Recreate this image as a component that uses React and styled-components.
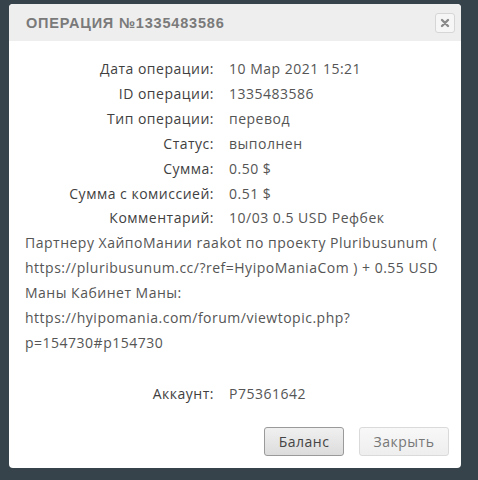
import styled, { createGlobalStyle } from "styled-components";

const GlobalStyle = createGlobalStyle`
  html, body {
    margin: 0;
    padding: 0;
    background: #36434b;
  }
  body {
    font-family: "Open Sans", "Liberation Sans", sans-serif;
  }
`;

/* ======================
      Styled Components
======================= */

const Backdrop = styled.div`
  width: 478px;
  height: 480px;
  padding: 4px 0 0 9px;
  box-sizing: border-box;
  overflow: hidden;
`;

const Dialog = styled.div`
  width: 452px;
  height: 464px;
  background: #fff;
  border-radius: 4px;
  overflow: hidden;
  display: flex;
  flex-direction: column;
`;

const Header = styled.div`
  height: 37px;
  background: #eeeeee;
  display: flex;
  align-items: center;
  justify-content: space-between;
  padding: 0 6px 0 17px;
`;

const Title = styled.h2`
  margin: 0;
  font-family: "Liberation Sans", "Open Sans", sans-serif;
  font-size: 14.5px;
  font-weight: 700;
  letter-spacing: 0.8px;
  color: #7a7a7a;
`;

const CloseBtn = styled.button`
  width: 20px;
  height: 20px;
  padding: 0;
  border: 1px solid #d6d6d6;
  border-radius: 3px;
  background: #f6f6f6;
  display: flex;
  align-items: center;
  justify-content: center;
  cursor: pointer;
`;

const Body = styled.div`
  flex: 1;
  padding: 16px 16px 0 16px;
  font-size: 14px;
  line-height: 24.9px;
  letter-spacing: 0.5px;
  color: #555;
`;

const Row = styled.div`
  display: flex;
  gap: 15px;
  margin-top: ${(p) => (p.$gap ? "26px" : "0")};
`;

const Label = styled.span`
  display: inline-block;
  width: 189px;
  text-align: right;
  color: #3f3f3f;
  flex-shrink: 0;
`;

const Value = styled.span`
  color: #555;
`;

const Comment = styled.div`
  word-wrap: break-word;

  ${Label} {
    margin-right: 15px;
  }
`;

const Footer = styled.div`
  display: flex;
  justify-content: flex-end;
  gap: 15px;
  padding: 0 12px 12px 0;
`;

const Button = styled.button`
  width: ${(p) => p.$w}px;
  height: 29px;
  padding: 0;
  font-family: "Open Sans", "Liberation Sans", sans-serif;
  font-size: 14px;
  letter-spacing: 0.5px;
  border-radius: 3px;
  cursor: pointer;
  color: ${(p) => (p.$primary ? "#444" : "#777")};
  border: 1px solid ${(p) => (p.$primary ? "#9a9a9a" : "#dadada")};
  background: ${(p) =>
    p.$primary
      ? "linear-gradient(#f0f0f0, #dcdcdc)"
      : "linear-gradient(#f8f8f8, #eeeeee)"};
`;

const rows = [
  ["Дата операции:", "10 Мар 2021 15:21"],
  ["ID операции:", "1335483586"],
  ["Тип операции:", "перевод"],
  ["Статус:", "выполнен"],
  ["Сумма:", "0.50 $"],
  ["Сумма с комиссией:", "0.51 $"],
];

export default function App() {
  return (
    <>
      <GlobalStyle />
      <Backdrop>
        <Dialog>
          <Header>
            <Title>ОПЕРАЦИЯ №1335483586</Title>
            <CloseBtn aria-label="close">
              <svg width="10" height="10" viewBox="0 0 10 10">
                <path
                  d="M2 2 L8 8 M8 2 L2 8"
                  stroke="#8a8a8a"
                  strokeWidth="2.4"
                  strokeLinecap="round"
                />
              </svg>
            </CloseBtn>
          </Header>

          <Body>
            {rows.map(([label, value]) => (
              <Row key={label}>
                <Label>{label}</Label>
                <Value>{value}</Value>
              </Row>
            ))}

            <Comment>
              <Label>Комментарий:</Label>
              <Value>
                10/03 0.5 USD Рефбек Партнеру ХайпоМании raakot по проекту
                Pluribusunum ( https://pluribusunum.cc/?ref=HyipoManiaCom ) +
                0.55 USD Маны Кабинет Маны:
                https://hyipomania.com/forum/viewtopic.php?p=154730#p154730
              </Value>
            </Comment>

            <Row $gap>
              <Label>Аккаунт:</Label>
              <Value>P75361642</Value>
            </Row>
          </Body>

          <Footer>
            <Button $primary $w={80}>Баланс</Button>
            <Button $w={90}>Закрыть</Button>
          </Footer>
        </Dialog>
      </Backdrop>
    </>
  );
}
